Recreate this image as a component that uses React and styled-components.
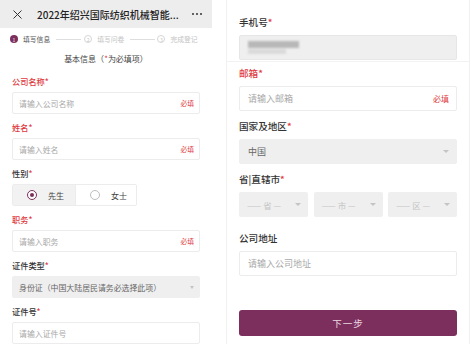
import React from "react";
import styled, { createGlobalStyle } from "styled-components";

const Global = createGlobalStyle`
  html, body { margin: 0; padding: 0; background: #fff; }
  body { font-family: "Noto Sans CJK SC", "Noto Sans", sans-serif; }
  * { box-sizing: border-box; }
`;

const PURPLE = "#7c2f5d";
const RED = "#e0393e";

const Page = styled.div`
  display: flex;
  width: 471px;
  height: 344px;
  overflow: hidden;
`;

const Left = styled.div`
  width: 212px;
  flex: none;
`;

const Right = styled.div`
  width: 244px;
  margin-left: 14px;
  flex: none;
  border-left: 1px solid #f1f1f1;
  border-right: 1px solid #f1f1f1;
`;

const Header = styled.div`
  height: 28px;
  background: #ededed;
  display: flex;
  align-items: center;
  padding: 0 10px 0 13px;
`;

const Title = styled.div`
  margin-left: 15px;
  font-size: 10px;
  font-weight: 500;
  color: #222;
  white-space: nowrap;
  flex: none;
`;

const Dots = styled.div`
  display: flex;
  gap: 2px;
  flex: none;
  margin-left: auto;
  span { width: 2px; height: 2px; border-radius: 1px; background: #333; }
`;

const Steps = styled.div`
  height: 22px;
  display: flex;
  align-items: center;
  padding-left: 10px;
`;

const Circle = styled.div`
  width: 8px;
  height: 8px;
  border-radius: 50%;
  flex: none;
  display: flex;
  align-items: center;
  justify-content: center;
  font-size: 5px;
  line-height: 1;
  background: ${(p) => (p.$active ? PURPLE : "#fff")};
  color: ${(p) => (p.$active ? "#fff" : "#c8c8c8")};
  border: ${(p) => (p.$active ? "none" : "1px solid #d6d6d6")};
`;

const StepText = styled.span`
  margin-left: 5px;
  font-size: 6.8px;
  white-space: nowrap;
  color: ${(p) => (p.$active ? "#555" : "#c4c4c4")};
`;

const StepLine = styled.div`
  width: 25px;
  height: 1px;
  background: #dedede;
  margin: 0 ${(p) => p.$r}px 0 ${(p) => p.$l}px;
`;

const Subtitle = styled.div`
  height: 18px;
  line-height: 18px;
  text-align: center;
  font-size: 8px;
  color: #444;
  em { font-style: normal; color: ${RED}; }
`;

const LeftForm = styled.div`
  padding: 7px 12px 0 12px;
`;

const LField = styled.div`
  margin-bottom: 7px;
`;

const LLabel = styled.div`
  height: 12px;
  line-height: 12px;
  margin-bottom: 5px;
  font-size: 8.2px;
  font-weight: 500;
  color: ${(p) => (p.$red ? RED : "#333")};
  em { font-style: normal; color: ${RED}; }
`;

const LInput = styled.div`
  height: 22px;
  border: 1px solid #ececec;
  border-radius: 2px;
  display: flex;
  align-items: center;
  justify-content: space-between;
  padding: 0 5px 0 6px;
  font-size: 7.9px;
  color: #a8a8a8;
  background: ${(p) => (p.$gray ? "#efefef" : "#fff")};
  ${(p) => (p.$gray ? "border-color: #efefef; color: #666;" : "")}
`;

const Must = styled.span`
  color: ${RED};
  font-size: ${(p) => p.$size || 6.8}px;
`;

const Caret = styled.span`
  width: 0;
  height: 0;
  border-left: ${(p) => p.$w}px solid transparent;
  border-right: ${(p) => p.$w}px solid transparent;
  border-top: ${(p) => p.$h}px solid #c4c4c4;
  flex: none;
`;

const RadioGroup = styled.div`
  width: 125px;
  height: 22px;
  display: grid;
  grid-template-columns: 63px 62px;
  border: 1px solid #ececec;
  border-radius: 2px;
  overflow: hidden;
`;

const RadioCell = styled.div`
  display: flex;
  align-items: center;
  padding-left: 14px;
  gap: 11px;
  font-size: 8px;
  color: #444;
  background: ${(p) => (p.$on ? "#f2f2f2" : "#fff")};
  border-right: ${(p) => (p.$on ? "1px solid #ececec" : "none")};
`;

const RadioDot = styled.span`
  width: 10px;
  height: 10px;
  border-radius: 50%;
  border: 1px solid ${(p) => (p.$on ? PURPLE : "#bdbdbd")};
  display: flex;
  align-items: center;
  justify-content: center;
  background: #fff;
  &::after {
    content: "";
    width: 4px;
    height: 4px;
    border-radius: 50%;
    background: ${(p) => (p.$on ? PURPLE : "transparent")};
  }
`;

const PhoneSection = styled.div`
  padding: 15px 12px 1px 12px;
  border-bottom: 1px solid #f2f2f2;
`;

const RightForm = styled.div`
  padding: 4px 12px 0 12px;
`;

const RField = styled.div`
  margin-bottom: ${(p) => p.$mb ?? 8}px;
`;

const RLabel = styled.div`
  height: 14px;
  line-height: 14px;
  margin-bottom: 6px;
  font-size: 9.6px;
  font-weight: 500;
  color: ${(p) => (p.$red ? RED : "#333")};
  em { font-style: normal; color: ${RED}; }
`;

const RInput = styled.div`
  height: 25px;
  border: 1px solid ${(p) => (p.$gray ? "#e6e6e6" : "#ececec")};
  border-radius: 2px;
  display: flex;
  align-items: center;
  justify-content: space-between;
  padding: 0 7px 0 8px;
  font-size: 9px;
  color: ${(p) => (p.$gray ? "#666" : "#a8a8a8")};
  background: ${(p) => (p.$gray ? "#efefef" : "#fff")};
`;

const Blur = styled.div`
  display: flex;
  flex-direction: column;
  gap: 1px;
  filter: blur(1px);
  span { height: 7px; width: 51px; background: #b8b8b8; }
  span + span { height: 5px; width: 38px; background: #dadada; }
`;

const Triple = styled.div`
  display: grid;
  grid-template-columns: 69px 69px 69px;
  justify-content: space-between;
`;

const SmallSelect = styled.div`
  height: 25px;
  background: #efefef;
  border-radius: 2px;
  display: flex;
  align-items: center;
  padding: 0 7px 0 8px;
  justify-content: space-between;
  font-size: 8.5px;
  color: #c6c6c6;
  white-space: nowrap;
`;

const Button = styled.button`
  margin-top: 34px;
  width: 100%;
  height: 26px;
  border: none;
  border-radius: 3px;
  background: ${PURPLE};
  color: #ecd8e2;
  font-family: inherit;
  font-size: 9.5px;
  letter-spacing: 1px;
  display: flex;
  align-items: center;
  justify-content: center;
`;

const CloseIcon = () => (
  <svg width="9" height="9" viewBox="0 0 9 9">
    <path d="M0.5 0.5 L8.5 8.5 M8.5 0.5 L0.5 8.5" stroke="#333" strokeWidth="1" fill="none" />
  </svg>
);

export default function App() {
  return (
    <Page>
      <Global />
      <Left>
        <Header>
          <CloseIcon />
          <Title>2022年绍兴国际纺织机械智能...</Title>
          <Dots><span /><span /><span /></Dots>
        </Header>
        <Steps>
          <Circle $active>1</Circle>
          <StepText $active>填写信息</StepText>
          <StepLine $l={6} $r={3} />
          <Circle>2</Circle>
          <StepText>填写问卷</StepText>
          <StepLine $l={6} $r={2} />
          <Circle>3</Circle>
          <StepText>完成登记</StepText>
        </Steps>
        <Subtitle>基本信息（<em>*</em>为必填项）</Subtitle>
        <LeftForm>
          <LField>
            <LLabel $red>公司名称*</LLabel>
            <LInput>请输入公司名称<Must>必填</Must></LInput>
          </LField>
          <LField>
            <LLabel $red>姓名*</LLabel>
            <LInput>请输入姓名<Must>必填</Must></LInput>
          </LField>
          <LField>
            <LLabel>性别<em>*</em></LLabel>
            <RadioGroup>
              <RadioCell $on><RadioDot $on />先生</RadioCell>
              <RadioCell><RadioDot />女士</RadioCell>
            </RadioGroup>
          </LField>
          <LField>
            <LLabel $red>职务*</LLabel>
            <LInput>请输入职务<Must>必填</Must></LInput>
          </LField>
          <LField>
            <LLabel>证件类型<em>*</em></LLabel>
            <LInput $gray>身份证（中国大陆居民请务必选择此项）<Caret $w={2.5} $h={3} /></LInput>
          </LField>
          <LField>
            <LLabel>证件号<em>*</em></LLabel>
            <LInput>请输入证件号</LInput>
          </LField>
        </LeftForm>
      </Left>
      <Right>
        <PhoneSection>
          <RLabel>手机号<em>*</em></RLabel>
          <RInput $gray>
            <Blur><span /><span /></Blur>
          </RInput>
        </PhoneSection>
        <RightForm>
          <RField>
            <RLabel $red>邮箱*</RLabel>
            <RInput>请输入邮箱<Must $size={8}>必填</Must></RInput>
          </RField>
          <RField>
            <RLabel>国家及地区<em>*</em></RLabel>
            <RInput $gray style={{ borderColor: "#efefef" }}>中国<Caret $w={3.5} $h={3.5} /></RInput>
          </RField>
          <RField $mb={14}>
            <RLabel>省|直辖市<em>*</em></RLabel>
            <Triple>
              <SmallSelect>—— 省 —<Caret $w={3.5} $h={3.5} /></SmallSelect>
              <SmallSelect>—— 市 —<Caret $w={3.5} $h={3.5} /></SmallSelect>
              <SmallSelect>—— 区 —<Caret $w={3.5} $h={3.5} /></SmallSelect>
            </Triple>
          </RField>
          <RField $mb={0}>
            <RLabel>公司地址</RLabel>
            <RInput>请输入公司地址</RInput>
          </RField>
          <Button>下一步</Button>
        </RightForm>
      </Right>
    </Page>
  );
}
